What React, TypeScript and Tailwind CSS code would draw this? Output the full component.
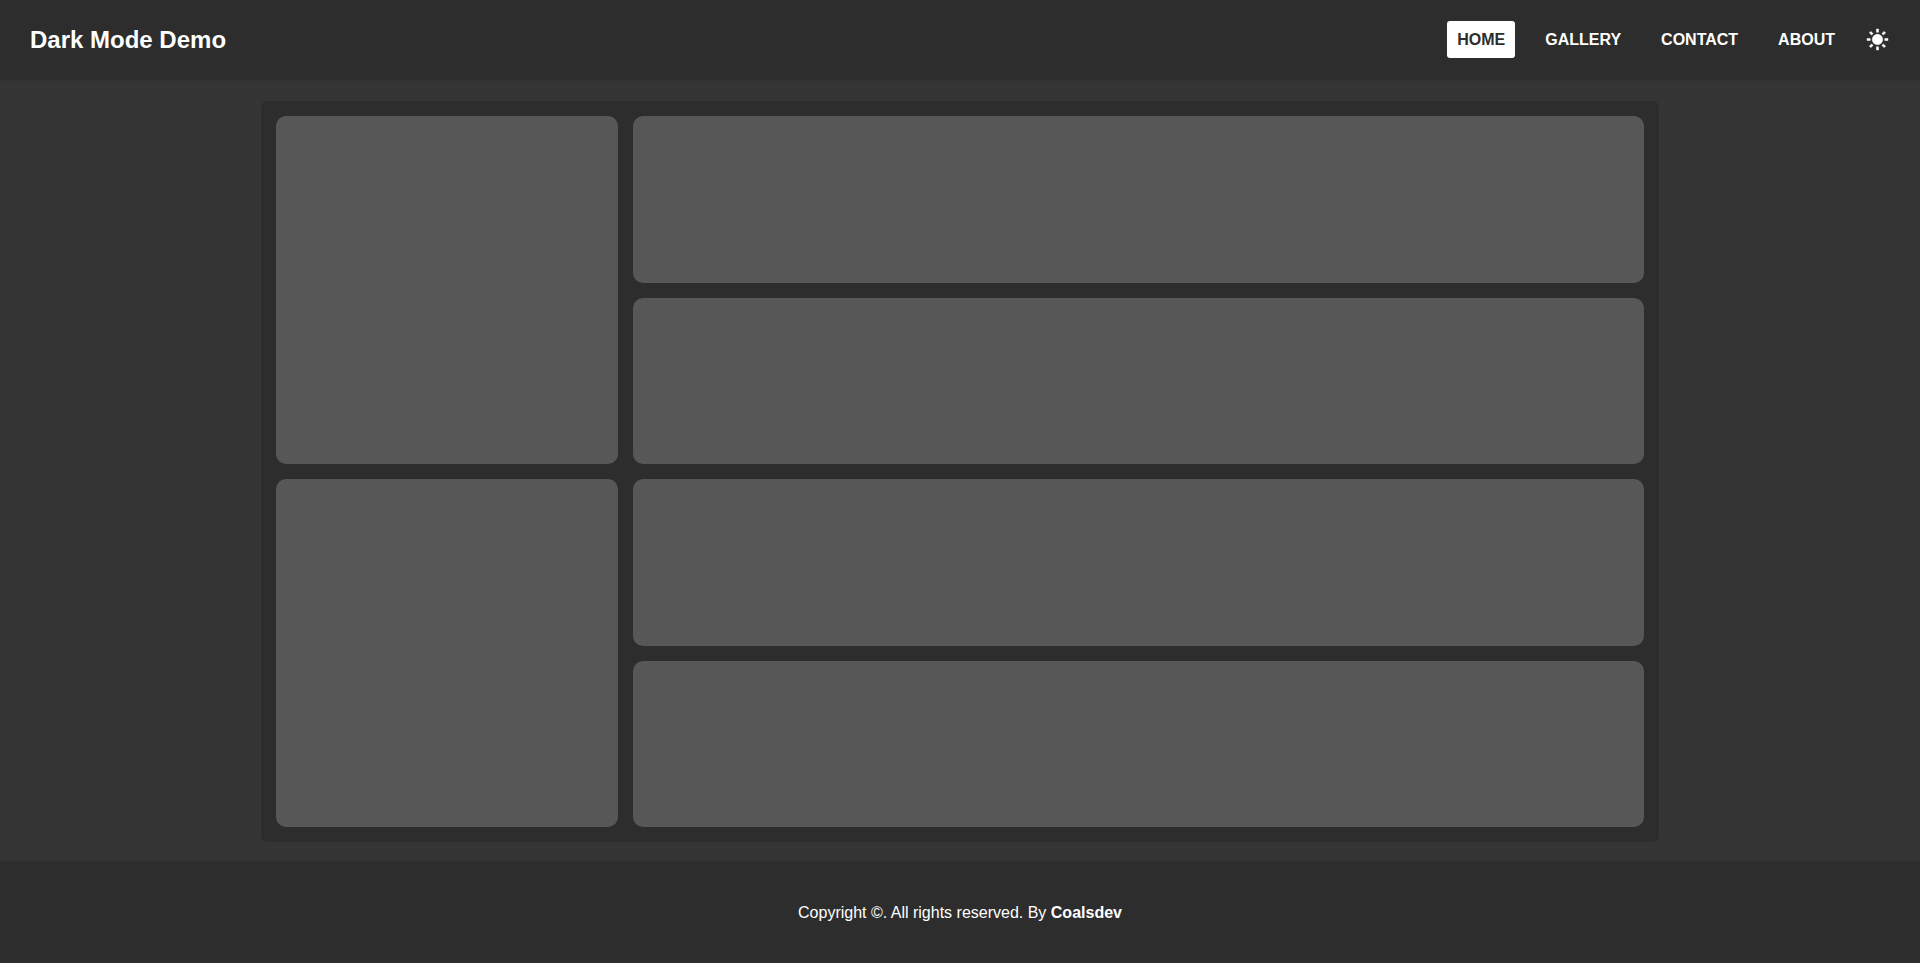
import { useState } from "react";

const links = ["Home", "Gallery", "Contact", "About"];

function SunIcon() {
  return (
    <svg
      viewBox="0 0 24 24"
      className="size-[25px]"
      fill="currentColor"
      stroke="currentColor"
      strokeWidth="0.5"
      aria-hidden="true"
    >
      <path d="M6.995 12c0 2.761 2.246 5.007 5.007 5.007s5.007-2.246 5.007-5.007-2.246-5.007-5.007-5.007S6.995 9.239 6.995 12zM11 19h2v3h-2zm0-17h2v3h-2zm-9 9h3v2H2zm17 0h3v2h-3zM5.637 19.778l-1.414-1.414 2.121-2.121 1.414 1.414zM16.242 6.344l2.122-2.122 1.414 1.414-2.122 2.122zM6.344 7.759 4.223 5.637l1.415-1.414 2.12 2.122zm13.434 10.605-1.414 1.414-2.122-2.122 1.414-1.414z" />
    </svg>
  );
}

export default function App() {
  const [active, setActive] = useState("Home");

  return (
    <div className="flex min-h-screen flex-col bg-[#353535] font-['Liberation_Sans',Arial,sans-serif] text-base text-white">
      <header className="flex h-20 items-center justify-between bg-[#2d2d2d] px-[30px] pb-px shadow-[0_0_5px_rgba(0,0,0,0.1)]">
        <h1 className="text-2xl font-bold">Dark Mode Demo</h1>
        <nav className="flex items-center gap-5">
          {links.map((name) => (
            <a
              key={name}
              href={`#${name.toLowerCase()}`}
              onClick={() => setActive(name)}
              className={`flex h-[37px] items-center rounded-[3px] px-2.5 font-bold uppercase ${
                active === name ? "bg-white text-[#2d2d2d]" : ""
              }`}
            >
              {name}
            </a>
          ))}
          <button type="button" aria-label="Toggle theme" className="cursor-pointer">
            <SunIcon />
          </button>
        </nav>
      </header>

      <main className="mx-auto mt-[21px] mb-5 grid w-full max-w-[1398px] grow grid-cols-[25%_1fr] grid-rows-4 gap-[15px] rounded-md bg-[#2d2d2d] p-[15px]">
        <section className="row-span-2 rounded-[10px] bg-[#575757]" />
        <section className="rounded-[10px] bg-[#575757]" />
        <section className="rounded-[10px] bg-[#575757]" />
        <section className="row-span-2 rounded-[10px] bg-[#575757]" />
        <section className="rounded-[10px] bg-[#575757]" />
        <section className="rounded-[10px] bg-[#575757]" />
      </main>

      <footer className="flex h-[101px] items-center justify-center bg-[#2d2d2d] shadow-[0_0_5px_rgba(0,0,0,0.1)]">
        <p>
          Copyright ©. All rights reserved. By <strong>Coalsdev</strong>
        </p>
      </footer>
    </div>
  );
}
